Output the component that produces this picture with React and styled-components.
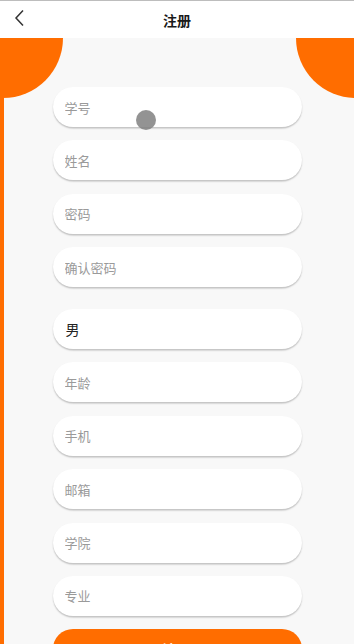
import styled, { createGlobalStyle } from "styled-components";

const GlobalStyle = createGlobalStyle`
    html, body {
        margin: 0;
        padding: 0;
        background: #f8f8f8;
        font-family: "Noto Sans CJK SC", "Noto Sans", sans-serif;
        overflow: hidden;
    }
    * {
        box-sizing: border-box;
    }
`;

const ORANGE = "#ff6d00";

const Page = styled.div`
    position: relative;
    width: 354px;
    height: 644px;
    overflow: hidden;
    background: #f8f8f8;
`;

const Header = styled.div`
    height: 38px;
    display: flex;
    align-items: center;
    justify-content: center;
    background: #ffffff;
    border-top: 1px solid #bdbdbd;
    position: relative;
`;

const BackButton = styled.button`
    position: absolute;
    left: 6px;
    top: 3px;
    width: 28px;
    height: 28px;
    border: none;
    background: transparent;
    padding: 0;
    display: flex;
    align-items: center;
    justify-content: center;
`;

const Title = styled.h1`
    margin: 0;
    font-size: 14px;
    font-weight: 700;
    color: #1a1a1a;
`;

const Content = styled.div`
    position: relative;
    display: flex;
    flex-direction: column;
    align-items: center;
    padding-top: 49px;
    height: 606px;
    overflow: hidden;
    box-shadow: inset 4px 0 0 ${ORANGE};

    &::before {
        content: "";
        position: absolute;
        left: -57px;
        top: -60px;
        width: 120px;
        height: 120px;
        border-radius: 50%;
        background: ${ORANGE};
    }

    &::after {
        content: "";
        position: absolute;
        right: -62px;
        top: -60px;
        width: 120px;
        height: 120px;
        border-radius: 50%;
        background: ${ORANGE};
    }
`;

const Form = styled.div`
    position: relative;
    z-index: 1;
    width: 249px;
    display: flex;
    flex-direction: column;
    flex-shrink: 0;
`;

const Field = styled.input`
    height: 40px;
    width: 100%;
    border: none;
    border-radius: 20px;
    background: #ffffff;
    box-shadow: 0 1.5px 1.5px rgba(0, 0, 0, 0.22);
    padding: 0 12px;
    margin-top: 13.4px;
    font-family: "Noto Sans CJK SC", "Noto Sans", sans-serif;
    font-size: 13px;
    color: #222;
    outline: none;
    caret-color: #000;

    &:first-child {
        margin-top: 0;
    }

    &::placeholder {
        color: #9a9a9a;
    }
`;

const SelectRow = styled.div`
    height: 40px;
    width: 100%;
    border-radius: 20px;
    background: #ffffff;
    box-shadow: 0 1.5px 1.5px rgba(0, 0, 0, 0.22);
    padding: 0 13px;
    margin-top: 21.8px;
    display: flex;
    align-items: center;
    font-size: 14px;
    color: #222;
`;

const SubmitButton = styled.button`
    height: 40px;
    width: 100%;
    border: none;
    border-radius: 20px;
    background: ${ORANGE};
    margin-top: 13.4px;
    color: #ffffff;
    font-family: "Noto Sans CJK SC", "Noto Sans", sans-serif;
    font-size: 15px;
    font-weight: 700;
`;

const TouchDot = styled.div`
    position: absolute;
    left: 136px;
    top: 110px;
    width: 20px;
    height: 20px;
    border-radius: 50%;
    background: rgba(128, 128, 128, 0.85);
    z-index: 5;
`;

const App = () => {
    return (
        <Page>
            <GlobalStyle />
            <Header>
                <BackButton>
                    <svg width="14" height="18" viewBox="0 0 14 18">
                        <path d="M10 1.5 L3 9 L10 16.5" fill="none" stroke="#333" strokeWidth="1.5" />
                    </svg>
                </BackButton>
                <Title>注册</Title>
            </Header>
            <Content>
                <Form>
                    <Field placeholder="学号" autoFocus />
                    <Field placeholder="姓名" />
                    <Field placeholder="密码" type="password" />
                    <Field placeholder="确认密码" type="password" />
                    <SelectRow>男</SelectRow>
                    <Field placeholder="年龄" />
                    <Field placeholder="手机" />
                    <Field placeholder="邮箱" />
                    <Field placeholder="学院" />
                    <Field placeholder="专业" />
                    <SubmitButton>注册</SubmitButton>
                </Form>
            </Content>
            <TouchDot />
        </Page>
    );
};

export default App;
